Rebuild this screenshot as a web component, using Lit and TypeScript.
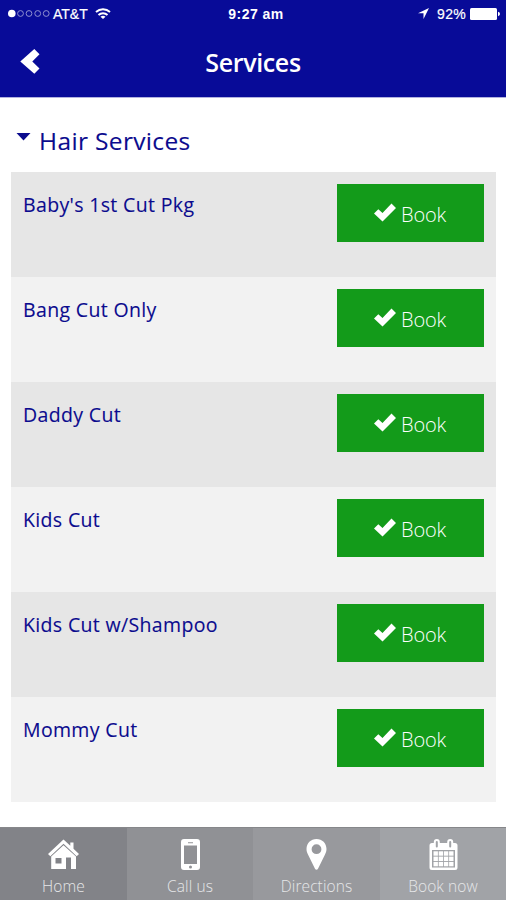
import { LitElement, html, svg, css } from "lit";
import { customElement, property } from "lit/decorators.js";

const icons: Record<string, unknown> = {
  home: svg`<path fill="#fff" d="M15.500 .5 0 15l2.300 2.200L15.500 4.800l13.200 12.400L31 15l-5.500-5.200V3.500h-3.200v3.200z"/><path fill="#fff" fill-rule="evenodd" d="M15.500 6.200 3.200 17.500V30H18V18.500h5V30h5V17.500zM7.500 19h6v5.500h-6z"/>`,
  phone: svg`<path fill="#fff" fill-rule="evenodd" d="M9 0h13a3 3 0 0 1 3 3v25a3 3 0 0 1-3 3H9a3 3 0 0 1-3-3V3a3 3 0 0 1 3-3zm0 6.500V25h13V6.500zm4-3.300v1h5v-1zM15.500 26.500a1.500 1.500 0 1 0 0 3 1.500 1.500 0 0 0 0-3z"/>`,
  pin: svg`<path fill="#fff" fill-rule="evenodd" d="M15.500 0C9.800 0 5.500 4.300 5.500 10c0 2 .6 3.800 1.600 5.800L14 29.800c.7 1.200 2.300 1.200 3 0l6.900-14c1-2 1.600-3.800 1.600-5.800 0-5.700-4.300-10-10-10zm0 5.300a4.900 4.900 0 1 1 0 9.800 4.900 4.900 0 0 1 0-9.800z"/>`,
  calendar: svg`<path fill="#fff" fill-rule="evenodd" d="M4 4h23a2.500 2.500 0 0 1 2.500 2.500v22A2.500 2.500 0 0 1 27 31H4a2.500 2.500 0 0 1-2.500-2.500v-22A2.500 2.500 0 0 1 4 4zm0 7v17.500h23V11z"/><path d="M8.800 3v4.500M22.200 3v4.500" stroke="#fff" stroke-width="6" stroke-linecap="round"/><path d="M8.800 3v4.500M22.200 3v4.500" stroke="#a1a3a7" stroke-width="2" stroke-linecap="round"/><g fill="#fff">${[5.5, 10.7, 15.9, 21.1].map((x) =>
    [12.3, 17.6, 22.9].map((y) => svg`<rect x=${x} y=${y} width="4.400" height="4.400"/>`)
  )}</g>`,
};

@customElement("status-bar")
export class StatusBar extends LitElement {
  static styles = css`
    :host { display: grid; grid-template-columns: 1fr auto 1fr; align-items: center; height: 27px; padding: 0 6px 0 8px; color: #fff; font: 14px "Liberation Sans", Arial, sans-serif; }
    .side { display: flex; align-items: center; }
    .right { justify-content: flex-end; }
    .dots { margin-right: 3px; }
    .carrier { letter-spacing: 0; margin-right: 7px; -webkit-text-stroke: 0.2px #fff; }
    .time { font-weight: 700; font-size: 14px; letter-spacing: 0.45px; margin-left: 4px; }
    .percent { margin: 0 4px 0 8px; font-size: 14px; letter-spacing: 0.3px; -webkit-text-stroke: 0.2px #fff; }
    svg { display: block; }
  `;
  render() {
    return html`
      <div class="side">
        <svg class="dots" width="42" height="10" viewBox="0 0 42 10">
          <circle cx="3.800" cy="4.500" r="3.800" fill="#fff" />
          ${[12.5, 21, 29.7, 38.2].map((x) => svg`<circle cx=${x} cy="4.500" r="2.900" fill="none" stroke="#8f90d0" stroke-width="1"/>`)}
        </svg>
        <span class="carrier">AT&amp;T</span>
        <svg width="16" height="13" viewBox="0 0 16 13" fill="none" stroke="#fff" stroke-width="1.900">
          <path d="M1 5a10.200 10.200 0 0 1 14 0M3.500 8a6.500 6.500 0 0 1 9 0" />
          <path d="M8 12 5.500 9.800a3.700 3.700 0 0 1 5 0z" fill="#fff" stroke="none" />
        </svg>
      </div>
      <span class="time">9:27 am</span>
      <div class="side right">
        <svg width="11" height="11" viewBox="0 0 11 11"><path d="M11 0 0 5.300h5.500V11z" fill="#fff" /></svg>
        <span class="percent">92%</span>
        <svg width="30" height="12" viewBox="0 0 30 12" fill="#fff"><rect width="27" height="12" rx="1.500" /><path d="M28 3.800q2 .6 2 2.200t-2 2.200z" /></svg>
      </div>
    `;
  }
}

@customElement("service-row")
export class ServiceRow extends LitElement {
  @property() name = "";
  static styles = css`
    :host { display: flex; justify-content: space-between; align-items: flex-start; height: 105px; box-sizing: border-box; padding: 12px 12px 0; }
    .name { color: #0b0b8e; font: 500 19.5px/28px "Open Sans", sans-serif; letter-spacing: 0.35px; margin-top: 7px; -webkit-text-stroke: 0.1px #0b0b8e; }
    .book { display: flex; align-items: center; justify-content: center; gap: 5px; width: 147px; height: 58px; padding: 0 1px 0 0; border: 0; background: #139b1a; color: #fff; font: 300 20px/28px "Open Sans", sans-serif; letter-spacing: -0.2px; }
    .book span { position: relative; top: 2px; }
    svg { display: block; margin-bottom: 1px; }
  `;
  render() {
    return html`
      <span class="name">${this.name}</span>
      <button class="book">
        <svg width="22" height="19" viewBox="0 0 22 19"><path d="M17.500.5 22 5 8.500 18.500 0 10.500l4.300-4.300 4.200 3.900z" fill="#fff" /></svg>
        <span>Book</span>
      </button>
    `;
  }
}

@customElement("app-root")
export class AppRoot extends LitElement {
  static styles = css`
    :host { display: flex; flex-direction: column; height: 900px; background: #fff; font-family: "Open Sans", sans-serif; overflow: hidden; }
    header { height: 98px; box-sizing: border-box; background: #080b98; border-bottom: 1px solid #b1b2df; }
    .nav { display: grid; grid-template-columns: 60px 1fr 60px; align-items: center; height: 70px; }
    .back { display: block; margin-left: 20px; margin-bottom: 2px; }
    h1 { margin: 0; text-align: center; color: #fff; font-weight: 600; font-size: 25px; line-height: 36px; letter-spacing: -0.35px; padding-bottom: 1px; }
    main { flex: 1; padding: 0 10px 0 11px; }
    .group { display: flex; align-items: center; gap: 8px; height: 74px; padding-left: 5px; box-sizing: border-box; padding-top: 11px; }
    .group svg { margin-bottom: 8px; }
    h2 { margin: 0; color: #0b0b8e; font-weight: 500; font-size: 24.5px; line-height: 36px; letter-spacing: 0.35px; -webkit-text-stroke: 0.1px #0b0b8e; }
    service-row { background: #f2f2f2; }
    service-row:nth-child(odd) { background: #e6e6e6; }
    footer { display: grid; grid-template-columns: 127px 126px 127px 126px; height: 73px; box-sizing: border-box; }
    .tab { display: flex; flex-direction: column; align-items: center; padding-top: 11px; border-top: 1px solid #86878a; color: #e6e7e9; font-weight: 300; font-size: 15.500px; line-height: 22px; letter-spacing: 0.1px; }
    .tab svg { margin-bottom: 5px; }
    .home { background: #828388; }
    .phone { background: #909195; }
    .pin { background: #98999d; }
    .calendar { background: #a1a3a7; }
  `;
  render() {
    const services = ["Baby's 1st Cut Pkg", "Bang Cut Only", "Daddy Cut", "Kids Cut", "Kids Cut w/Shampoo", "Mommy Cut"];
    const tabs = [["home", "Home"], ["phone", "Call us"], ["pin", "Directions"], ["calendar", "Book now"]];
    return html`
      <header>
        <status-bar></status-bar>
        <div class="nav">
          <svg class="back" width="20" height="25" viewBox="0 0 20 25"><path d="M14.300 0 19.500 5.200 12.300 12.500l7.200 7-5.200 5.300L.3 12.500z" fill="#fff" /></svg>
          <h1>Services</h1>
        </div>
      </header>
      <main>
        <div class="group">
          <svg width="15" height="8" viewBox="0 0 15 8"><path d="M.5 0h14l-7 7.500z" fill="#0b0b8e" /></svg>
          <h2>Hair Services</h2>
        </div>
        <div>${services.map((s) => html`<service-row .name=${s}></service-row>`)}</div>
      </main>
      <footer>
        ${tabs.map(([id, label]) => html`<div class="tab ${id}"><svg width="31" height="31" viewBox="0 0 31 31" fill="none">${icons[id]}</svg><span>${label}</span></div>`)}
      </footer>
    `;
  }
}
